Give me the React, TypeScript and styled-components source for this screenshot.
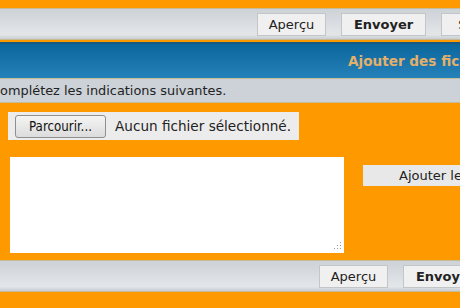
import styled, { createGlobalStyle } from "styled-components"

const Global = createGlobalStyle`
    html, body {
        margin: 0;
        padding: 0;
        background: #ff9900;
        overflow: hidden;
        font-family: "DejaVu Sans", Verdana, sans-serif;
        font-size: 12px;
        color: #222;
    }
`
const Page = styled.div`
    width: 640px;
    margin-left: -10px;
    padding-top: 8px;
`
const Toolbar = styled.div<{ $start: number }>`
    display: flex;
    align-items: center;
    gap: 15px;
    height: 32px;
    padding-left: ${props => props.$start}px;
    border-top: 1px solid #c8bc98;
    border-bottom: 1px solid #c8bc98;
    background: linear-gradient(#cdd2d7, #e3e6e9 85%, #c9ced3);
    box-sizing: border-box;
`
const ToolButton = styled.button<{ $bold?: boolean; $w: number }>`
    width: ${props => props.$w}px;
    height: 23px;
    padding: 0;
    font-family: "DejaVu Sans", Verdana, sans-serif;
    font-size: 13px;
    font-weight: ${props => props.$bold ? "bold" : "normal"};
    color: #222;
    background: #f0f0f0;
    border: 1px solid #c3c6c9;
    text-align: center;
`
const TitleBar = styled.div`
    height: 37px;
    margin-top: 2px;
    display: flex;
    align-items: center;
    padding-left: 358px;
    border-top: 2px solid #1b5a80;
    border-bottom: 1px solid #c8bc98;
    background: linear-gradient(#0b669c, #2581b9);
    color: #e2b06b;
    font-weight: bold;
    font-size: 13.6px;
    white-space: nowrap;
    box-sizing: border-box;
`
const InfoRow = styled.div`
    height: 24px;
    display: flex;
    align-items: center;
    padding-left: 1px;
    background: #ccd2d8;
    border-bottom: 1px solid #c8bc98;
    font-size: 12.9px;
    color: #222;
    white-space: nowrap;
    box-sizing: border-box;
`
const Content = styled.div`
    display: flex;
    flex-direction: column;
    padding: 9px 0 7px 18px;
`
const FileBox = styled.div`
    display: flex;
    align-items: center;
    gap: 9px;
    width: 291px;
    height: 28px;
    padding-left: 7px;
    background: #ececec;
    box-sizing: border-box;
    font-size: 13.6px;
    white-space: nowrap;
`
const BrowseButton = styled.button`
    width: 91px;
    height: 23px;
    padding: 0;
    font-family: "DejaVu Sans Condensed", "DejaVu Sans", sans-serif;
    font-size: 13.2px;
    color: #111;
    border: 1px solid #8e8f8f;
    border-radius: 3px;
    background: linear-gradient(#f4f4f4, #dcdcdc);
`
const Row = styled.div`
    display: flex;
    align-items: flex-start;
    margin-top: 17px;
    padding-left: 2px;
`
const AreaWrap = styled.div`
    position: relative;
    width: 334px;
    height: 96px;
`
const Area = styled.textarea`
    display: block;
    width: 100%;
    height: 100%;
    margin: 0;
    border: none;
    background: #fff;
    box-sizing: border-box;
    resize: none;
`
const Grip = styled.svg`
    position: absolute;
    right: 2px;
    bottom: 2px;
`
const AddButton = styled.button`
    width: 140px;
    height: 21px;
    margin: 8px 0 0 19px;
    padding: 0 0 0 36px;
    text-align: left;
    white-space: nowrap;
    font-family: "DejaVu Sans", Verdana, sans-serif;
    font-size: 13px;
    color: #222;
    background: #e8e8e8;
    border: none;
`

function Buttons({ start }: { start: number }) {
    return (
        <Toolbar $start={start}>
            <ToolButton $w={69}>Aperçu</ToolButton>
            <ToolButton $w={85} $bold>Envoyer</ToolButton>
            <ToolButton $w={80}>Sauver</ToolButton>
        </Toolbar>
    )
}

export default function App() {
    return (
        <>
            <Global />
            <Page>
                <Buttons start={267} />
                <TitleBar>Ajouter des fichiers joints</TitleBar>
                <InfoRow>Complétez les indications suivantes.</InfoRow>
                <Content>
                    <FileBox>
                        <BrowseButton>Parcourir...</BrowseButton>
                        <span>Aucun fichier sélectionné.</span>
                    </FileBox>
                    <Row>
                        <AreaWrap>
                            <Area />
                            <Grip width="10" height="10" viewBox="0 0 10 10">
                                <g fill="#9a9a9a">
                                    <rect x="8" y="1" width="1" height="1" />
                                    <rect x="5" y="4" width="1" height="1" />
                                    <rect x="8" y="4" width="1" height="1" />
                                    <rect x="2" y="7" width="1" height="1" />
                                    <rect x="5" y="7" width="1" height="1" />
                                    <rect x="8" y="7" width="1" height="1" />
                                </g>
                            </Grip>
                        </AreaWrap>
                        <AddButton>Ajouter le fichier</AddButton>
                    </Row>
                </Content>
                <Buttons start={329} />
            </Page>
        </>
    )
}
